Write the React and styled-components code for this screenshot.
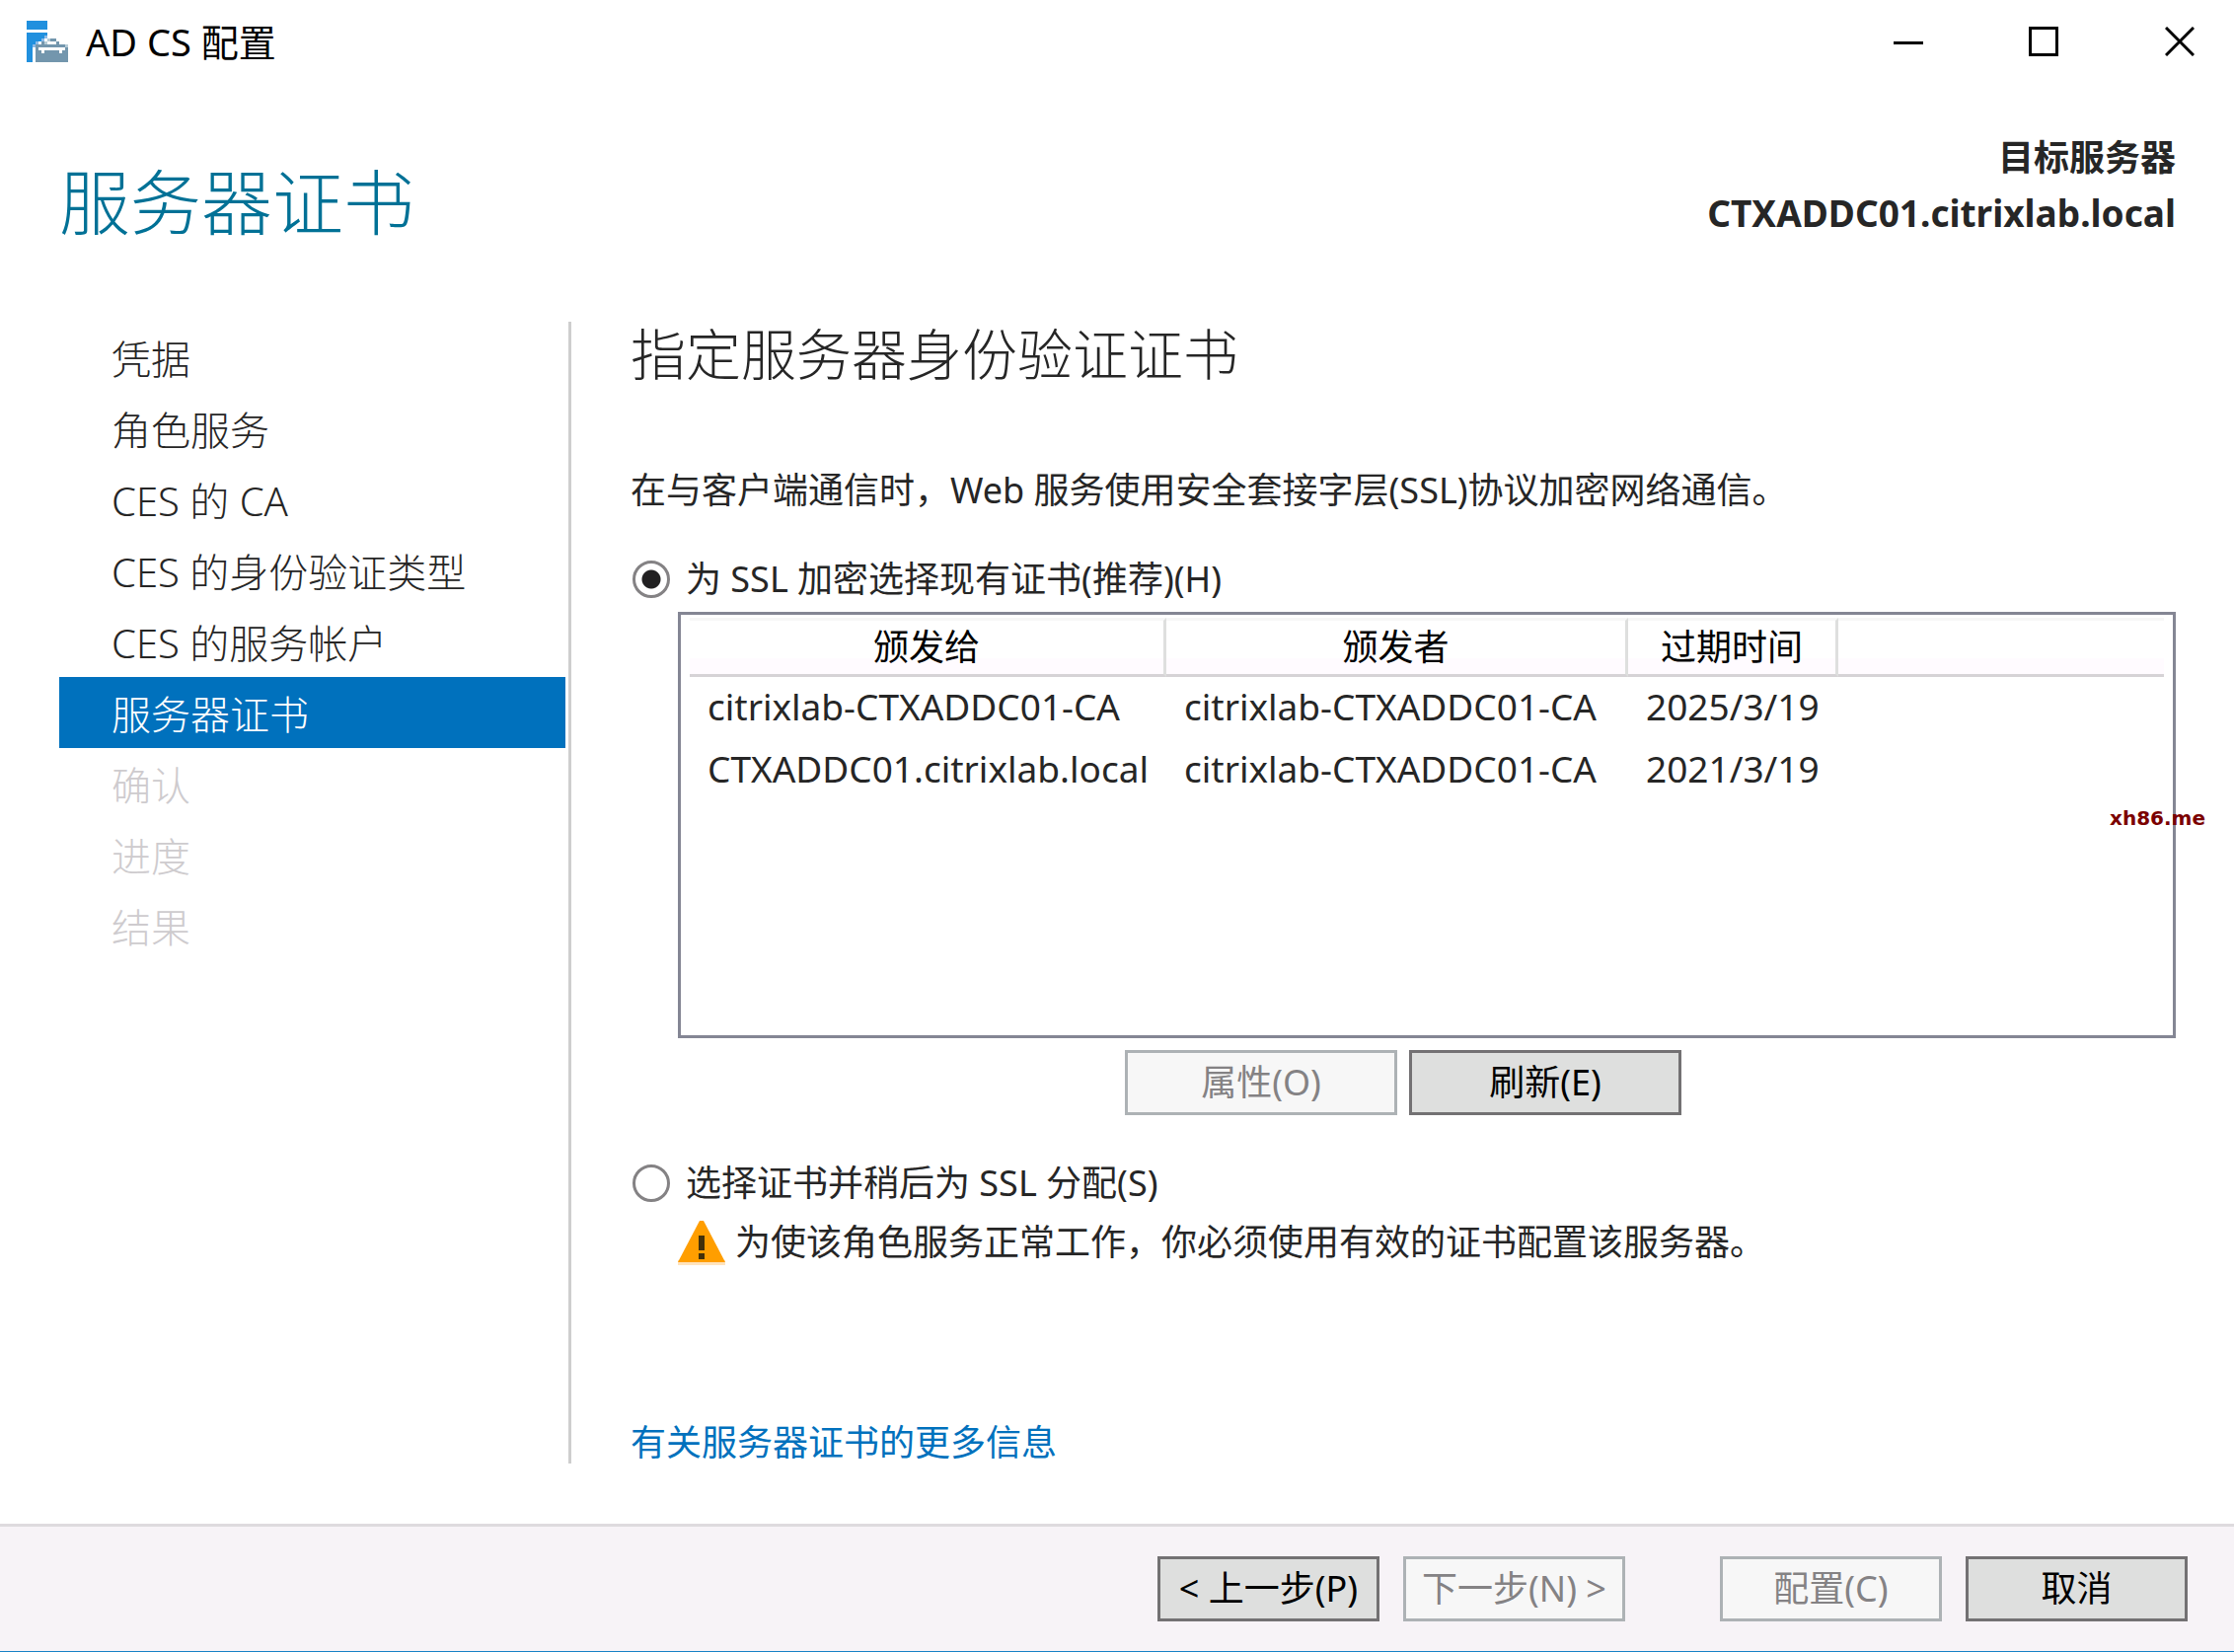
import React, { useState } from "react";
import styled, { createGlobalStyle } from "styled-components";

const GlobalStyle = createGlobalStyle`
  * {
    box-sizing: border-box;
  }

  body {
    margin: 0;
    background: #fff;
    color: #262626;
    font-family: "Noto Sans", "Noto Sans CJK SC", sans-serif;
    font-size: 36px;
    line-height: 54px;
  }
`;

const Window = styled.div`
  display: flex;
  flex-direction: column;
  min-height: 100vh;
  background: #fff;
`;

const TitleBar = styled.div`
  display: flex;
  align-items: center;
  justify-content: space-between;
  height: 84px;
  padding-left: 27px;
  color: #000;
`;

const AppName = styled.div`
  display: flex;
  align-items: center;
  gap: 18px;
  font-size: 38px;
`;

const Controls = styled.div`
  display: flex;
  height: 84px;
`;

const ControlButton = styled.button`
  display: flex;
  align-items: center;
  justify-content: center;
  width: 137px;
  padding: 0;
  border: 0;
  background: none;

  &:last-child {
    width: 125px;
    padding-left: 14px;
  }
`;

const Header = styled.header`
  display: flex;
  justify-content: space-between;
  padding: 48px 59px 0 60px;
  height: 242px;
`;

const PageTitle = styled.h1`
  margin: 18px 0 0;
  color: #007196;
  font-size: 72px;
  font-weight: 300;
  line-height: 108px;
`;

const Target = styled.div`
  text-align: right;
  font-weight: 700;
  line-height: 56px;
`;

const ServerName = styled.div`
  font-size: 37px;
`;

const Body = styled.div`
  display: flex;
  flex: 1;
  padding: 0 59px 61px 60px;
`;

const Nav = styled.nav`
  flex: 0 0 519px;
  padding-right: 3px;
  border-right: 3px solid #cecece;
`;

const NavItem = styled.button`
  display: block;
  width: 100%;
  height: 72px;
  padding: 0 0 0 53px;
  border: 0;
  background: ${(p) => (p.$active ? "#0071bd" : "none")};
  color: ${(p) => (p.$active ? "#fff" : "#262626")};
  font-family: inherit;
  font-size: 40px;
  font-weight: 300;
  text-align: left;

  &:disabled {
    color: #cecbce;
  }
`;

const Main = styled.main`
  display: flex;
  flex: 1;
  flex-direction: column;
  padding-left: 60px;
`;

const Heading = styled.h2`
  margin: 0 0 80px;
  font-size: 56px;
  font-weight: 300;
  line-height: 64px;
`;

const Text = styled.p`
  margin: 0 0 36px;
`;

const Option = styled.label`
  display: flex;
  align-items: center;
  gap: 16px;
`;

const Radio = styled.input`
  appearance: none;
  flex: none;
  width: 38px;
  height: 38px;
  margin: 0 0 0 2px;
  border: 3px solid #848284;
  border-radius: 50%;
  background: #fff;

  &:checked {
    background: radial-gradient(circle, #212021 9px, #fff 10px);
  }
`;

const Indent = styled.div`
  padding: 6px 0 0 48px;
`;

const ListArea = styled.div`
  position: relative;
`;

const ListBox = styled.div`
  height: 432px;
  padding: 3px 9px;
  border: 3px solid #848694;
`;

const CertTable = styled.table`
  width: 100%;
  table-layout: fixed;
  border-collapse: separate;
  border-spacing: 0;
`;

const HeadCell = styled.th`
  width: ${(p) => p.$width || "auto"};
  height: 60px;
  padding: 0;
  border-top: 3px solid #f7f7f7;
  border-bottom: 3px solid #d6d3d6;
  border-right: ${(p) => (p.$width ? "3px solid #dedfde" : "0")};
  background: linear-gradient(#fff 70%, #fffbff 70%);
  color: #000;
  font-weight: 400;
`;

const Cell = styled.td`
  height: 63px;
  padding: 0 0 3px 18px;
  font-size: 37px;
  white-space: nowrap;
`;

const Watermark = styled.span`
  position: absolute;
  right: -30px;
  top: 194px;
  color: #7b0000;
  font-family: "DejaVu Sans", sans-serif;
  font-size: 20px;
  font-weight: 700;
  line-height: 30px;
`;

const Button = styled.button`
  width: ${(p) => p.$width || "225px"};
  height: 66px;
  padding: 0;
  border: 3px solid #737173;
  background: #dedfde;
  color: #000;
  font: inherit;
  white-space: nowrap;

  &:disabled {
    border-color: #adb2b5;
    background: #f7f7f7;
    color: #848284;
  }
`;

const ListActions = styled.div`
  display: flex;
  justify-content: center;
  gap: 12px;
  margin: 12px 0 42px;
`;

const Warning = styled.div`
  display: flex;
  align-items: center;
  gap: 10px;
`;

const MoreLink = styled.a`
  align-self: flex-start;
  margin-top: auto;
  color: #0071bd;
  line-height: 42px;
  text-decoration: none;
`;

const Footer = styled.footer`
  display: flex;
  justify-content: flex-end;
  gap: 24px;
  padding: 30px 47px 30px 0;
  border-top: 3px solid #dedbde;
  border-bottom: 1px solid #1882c6;
  background: #f7f3f7;
`;

const ButtonPair = styled.div`
  display: flex;
  gap: 24px;
  margin-left: 72px;
`;

const AppIcon = () => (
  <svg width="42" height="42" viewBox="0 0 14 14" shapeRendering="crispEdges">
    <path fill="#2190de" d="M0 0h7v3H0zM0 4h7v2H5v1H3v1H2v6H0z" />
    <path fill="#8cbae7" d="M6 5h1v1H6zM5 6h1v1H5zM2 8h1v1H2zM3 7h1v1H3z" />
    <path fill="#b5cbd6" d="M7 6h3v1H7zM6 7h1v1H6zM10 7h1v1h-1zM13 8h1v1h-1z" />
    <path fill="#7396ad" d="M8 6h2v1H8zM5 7h1v1H5zM10 7h1v1h-1zM3 8h10v1h1v5H3z" />
    <path fill="#fff" d="M7 7h3v1H7zM4 9h9v1h-1v1h-1v-1H6v1H5v-1H4z" />
  </svg>
);

const WarningIcon = () => (
  <svg width="48" height="45" viewBox="0 0 48 45">
    <path fill="#ffe3bd" d="M0 40h48v5H0z" />
    <path fill="#ff9e00" d="M22 0h4l22 42H0z" />
    <path fill="#42300a" d="M21 15h6v15h-6zM21 33h6v6h-6z" />
  </svg>
);

const steps = [
  { name: "凭据" },
  { name: "角色服务" },
  { name: "CES 的 CA" },
  { name: "CES 的身份验证类型" },
  { name: "CES 的服务帐户" },
  { name: "服务器证书", active: true },
  { name: "确认", disabled: true },
  { name: "进度", disabled: true },
  { name: "结果", disabled: true },
];

const certificates = [
  ["citrixlab-CTXADDC01-CA", "citrixlab-CTXADDC01-CA", "2025/3/19"],
  ["CTXADDC01.citrixlab.local", "citrixlab-CTXADDC01-CA", "2021/3/19"],
];

const App = () => {
  const [mode, setMode] = useState("existing");

  return (
    <Window>
      <GlobalStyle />
      <TitleBar>
        <AppName>
          <AppIcon />
          <span>AD CS 配置</span>
        </AppName>
        <Controls>
          <ControlButton aria-label="最小化">
            <svg width="30" height="30">
              <path d="M0 16.500h30" stroke="#000" strokeWidth="3" />
            </svg>
          </ControlButton>
          <ControlButton aria-label="最大化">
            <svg width="30" height="30">
              <path d="M1.500 1.500h27v27h-27z" fill="none" stroke="#000" strokeWidth="3" />
            </svg>
          </ControlButton>
          <ControlButton aria-label="关闭">
            <svg width="30" height="30">
              <path d="M1 1l28 28M29 1L1 29" stroke="#000" strokeWidth="3" />
            </svg>
          </ControlButton>
        </Controls>
      </TitleBar>

      <Header>
        <PageTitle>服务器证书</PageTitle>
        <Target>
          <div>目标服务器</div>
          <ServerName>CTXADDC01.citrixlab.local</ServerName>
        </Target>
      </Header>

      <Body>
        <Nav>
          {steps.map((step) => (
            <NavItem key={step.name} $active={step.active} disabled={step.disabled}>
              {step.name}
            </NavItem>
          ))}
        </Nav>

        <Main>
          <Heading>指定服务器身份验证证书</Heading>
          <Text>在与客户端通信时，Web 服务使用安全套接字层(SSL)协议加密网络通信。</Text>

          <Option>
            <Radio
              type="radio"
              name="mode"
              checked={mode === "existing"}
              onChange={() => setMode("existing")}
            />
            为 SSL 加密选择现有证书(推荐)(H)
          </Option>
          <Indent>
            <ListArea>
              <ListBox>
                <CertTable>
                  <thead>
                    <tr>
                      <HeadCell $width="483px">颁发给</HeadCell>
                      <HeadCell $width="468px">颁发者</HeadCell>
                      <HeadCell $width="213px">过期时间</HeadCell>
                      <HeadCell />
                    </tr>
                  </thead>
                  <tbody>
                    {certificates.map((row) => (
                      <tr key={row[0]}>
                        {row.map((value, i) => (
                          <Cell key={i}>{value}</Cell>
                        ))}
                        <Cell />
                      </tr>
                    ))}
                  </tbody>
                </CertTable>
              </ListBox>
              <Watermark>xh86.me</Watermark>
            </ListArea>
          </Indent>
          <ListActions>
            <Button $width="276px" disabled>
              属性(O)
            </Button>
            <Button $width="276px">刷新(E)</Button>
          </ListActions>

          <Option>
            <Radio
              type="radio"
              name="mode"
              checked={mode === "later"}
              onChange={() => setMode("later")}
            />
            选择证书并稍后为 SSL 分配(S)
          </Option>
          <Indent>
            <Warning>
              <WarningIcon />
              <span>为使该角色服务正常工作，你必须使用有效的证书配置该服务器。</span>
            </Warning>
          </Indent>

          <MoreLink href="#more">有关服务器证书的更多信息</MoreLink>
        </Main>
      </Body>

      <Footer>
        <Button>&lt; 上一步(P)</Button>
        <Button disabled>下一步(N) &gt;</Button>
        <ButtonPair>
          <Button disabled>配置(C)</Button>
          <Button>取消</Button>
        </ButtonPair>
      </Footer>
    </Window>
  );
};

export default App;
